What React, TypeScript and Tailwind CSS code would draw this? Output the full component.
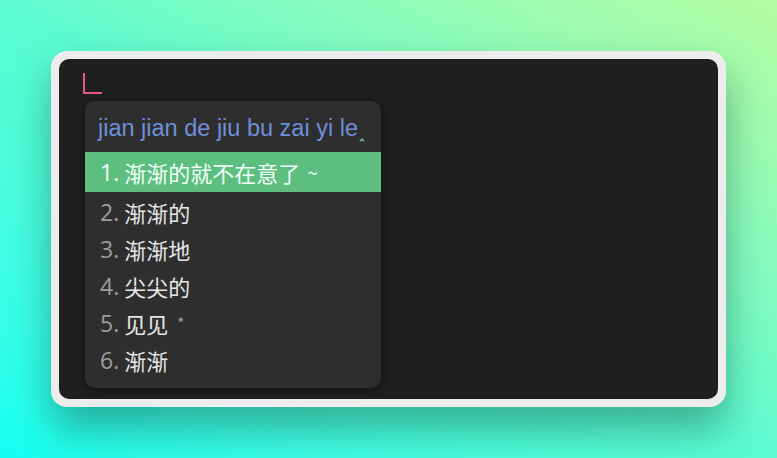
const candidates = [
  { n: 1, text: "渐渐的就不在意了", mark: "~" },
  { n: 2, text: "渐渐的" },
  { n: 3, text: "渐渐地" },
  { n: 4, text: "尖尖的" },
  { n: 5, text: "见见", mark: "*" },
  { n: 6, text: "渐渐" },
];

const cjk = { fontFamily: '"Noto Sans CJK SC", "Noto Sans", sans-serif' };

function CandidateRow({ n, text, mark, active }: { n: number; text: string; mark?: string; active: boolean }) {
  return (
    <div
      className={`flex items-center pl-[15px] text-[22px] ${
        active ? "h-[40px] bg-[#5cbf80] text-[#f2fff6]" : "h-[37px] text-[#e6e6e6]"
      }`}
    >
      <span
        className={`text-[23px] ${active ? "text-[#f2fff6]" : "text-[#9d9d9d]"}`}
        style={{ fontFamily: '"Open Sans", "Noto Sans", sans-serif' }}
      >
        {n}.
      </span>
      <span className="ml-[5px]">{text}</span>
      {mark === "~" && <span className="ml-[7px] text-[19px] text-[#f2fff6]">~</span>}
      {mark === "*" && <span className="ml-[9px] text-[15px] text-[#9d9d9d]">*</span>}
    </div>
  );
}

export default function App() {
  return (
    <div className="h-[458px] w-full overflow-hidden bg-gradient-to-tr from-[#10fff2] via-[#5cfcd0] to-[#b4fca0] pl-[51px] pt-[51px]">
      <div className="h-[356px] w-[675px] rounded-[16px] bg-[#ececec] p-[8px] shadow-[0_22px_40px_rgba(20,80,60,0.45)]">
        <div className="h-full rounded-[10px] bg-[#1f1f1f] pl-[24px] pt-[14px]">
          <div className="h-[21px] w-[19px] border-b-2 border-l-2 border-[#e2588c]" />
          <div
            className="mt-[7px] ml-[2px] h-[287px] w-[296px] overflow-hidden rounded-[10px] bg-[#2e2e2e] shadow-[0_2px_8px_rgba(0,0,0,0.5)]"
            style={cjk}
          >
            <div className="flex h-[51px] items-end pb-[12px] pl-[13px]">
              <span
                className="text-[23.5px] leading-none text-[#6f8fda]"
                style={{ fontFamily: '"Liberation Sans", Arial, sans-serif' }}
              >
                jian jian de jiu bu zai yi le
              </span>
              <svg className="mb-[-2px] ml-[1px]" width="6" height="4" viewBox="0 0 6 4">
                <path d="M0.8 3.4 L3 1 L5.2 3.4" fill="none" stroke="#5fb89a" strokeWidth="1.4" />
              </svg>
            </div>
            {candidates.map((c) => (
              <div key={c.n} className={c.n === 2 ? "mt-[2px]" : ""}>
                <CandidateRow n={c.n} text={c.text} mark={c.mark} active={c.n === 1} />
              </div>
            ))}
          </div>
        </div>
      </div>
    </div>
  );
}
